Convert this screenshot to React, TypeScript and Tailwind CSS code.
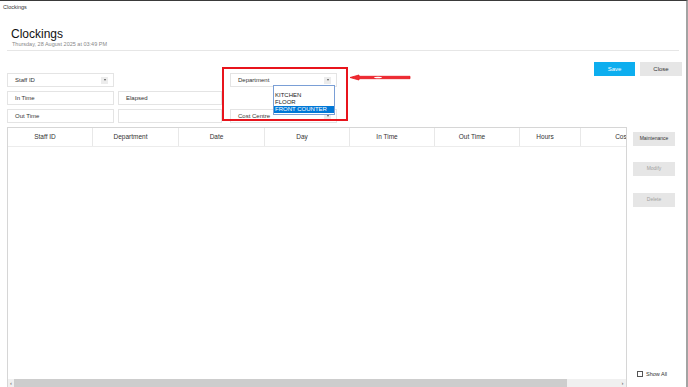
import React from 'react';

const COLUMNS: { label: string; width: number }[] = [
  { label: 'Staff ID', width: 85 },
  { label: 'Department', width: 86 },
  { label: 'Date', width: 86 },
  { label: 'Day', width: 85 },
  { label: 'In Time', width: 85 },
  { label: 'Out Time', width: 85 },
  { label: 'Hours', width: 61 },
  { label: 'Cost Centre', width: 114 },
];

function Field({ label, width }: { label?: string; width: number }) {
  return (
    <div
      className="h-[14px] flex items-center bg-white border border-[#e4e4e4] pl-[7px] text-[6px] text-[#333] flex-shrink-0"
      style={{ width }}
    >
      {label}
    </div>
  );
}

function Combo({ label }: { label: string }) {
  return (
    <div className="h-[14px] w-[107px] flex items-center justify-between bg-white border border-[#e4e4e4] pl-[7px] pr-[5px] text-[6px] text-[#333] flex-shrink-0">
      <span>{label}</span>
      {/* drop arrow */}
      <div className="w-[7px] h-[7px] bg-[#ececec] flex items-center justify-center">
        <div className="w-0 h-0 border-l-[1.5px] border-r-[1.5px] border-t-[2px] border-l-transparent border-r-transparent border-t-[#555]" />
      </div>
    </div>
  );
}

function SideButton({ label, disabled }: { label: string; disabled?: boolean }) {
  return (
    <div
      className={`w-[42px] h-[14px] flex items-center justify-center bg-[#e6e6e6] text-[5px] whitespace-nowrap ${disabled ? 'text-[#a0a0a0]' : 'text-[#333]'}`}
    >
      {label}
    </div>
  );
}

export default function App() {
  return (
    <div className="relative w-[688px] h-[387px] overflow-hidden bg-white border-t border-t-[#3a3a3a] border-r-2 border-r-[#a3a3a3] font-['Liberation_Sans',Arial,sans-serif] text-[#222] flex flex-col">
      {/* Window title */}
      <div className="h-[12px] pl-[3px] pt-[3px] text-[5.5px] leading-[6px] text-[#333]">Clockings</div>

      {/* Page heading */}
      <div className="pl-[11px] pt-[15px]">
        <div className="text-[12px] leading-[13px] text-[#111]">Clockings</div>
        <div className="text-[5.5px] leading-[7px] text-[#888] pl-[1px]">Thursday, 28 August 2025 at 03:49 PM</div>
      </div>
      <div className="mx-[7px] mt-[2px] border-t border-[#e6e6e6]" />

      {/* Filters + actions */}
      <div className="flex h-[76px] pl-[7px] pr-[4px]">
        <div className="mt-[22px] flex flex-col gap-[4px]">
          <div className="flex gap-[4px]">
            <Combo label="Staff ID" />
            <div className="w-[104px] flex-shrink-0" />
            <div className="ml-[4px]">
              <Combo label="Department" />
            </div>
          </div>
          <div className="flex gap-[4px]">
            <Field label="In Time" width={107} />
            <Field label="Elapsed" width={104} />
          </div>
          <div className="flex gap-[4px]">
            <Field label="Out Time" width={107} />
            <Field width={104} />
            <div className="ml-[4px]">
              <Combo label="Cost Centre" />
            </div>
          </div>
        </div>
        <div className="ml-auto mt-[11px] flex gap-[5px] h-[14px]">
          <div className="w-[41px] h-[14px] flex items-center justify-center bg-[#0daeef] text-white text-[6px]">Save</div>
          <div className="w-[42px] h-[14px] flex items-center justify-center bg-[#e6e6e6] text-[#333] text-[6px]">Close</div>
        </div>
      </div>

      {/* Grid + side buttons */}
      <div className="flex flex-1 min-h-0">
        <div className="ml-[7px] w-[620px] flex flex-col border-l border-t border-r border-[#d6d6d6] overflow-hidden">
          <div className="flex h-[19px] border-b border-[#ececec] flex-shrink-0">
            {COLUMNS.map(c => (
              <div
                key={c.label}
                className="flex-shrink-0 flex items-center justify-center pr-[10px] border-r border-[#e8e8e8] text-[6.5px] text-[#333] whitespace-nowrap"
                style={{ width: c.width }}
              >
                {c.label}
              </div>
            ))}
          </div>
          <div className="flex-1" />
          {/* Horizontal scrollbar */}
          <div className="h-[8px] flex items-center bg-[#f0f0f0] flex-shrink-0">
            <div className="w-[6px] flex items-center justify-center text-[6px] leading-[6px] text-[#555]">‹</div>
            <div className="w-[553px] h-full bg-[#cdcdcd]" />
            <div className="flex-1" />
            <div className="w-[7px] flex items-center justify-center text-[6px] leading-[6px] text-[#555]">›</div>
          </div>
        </div>
        <div className="ml-[6px] flex flex-col">
          <div className="mt-[5px]">
            <SideButton label="Maintenance" />
          </div>
          <div className="mt-[16px]">
            <SideButton label="Modify" disabled />
          </div>
          <div className="mt-[17px]">
            <SideButton label="Delete" disabled />
          </div>
          <div className="mt-auto mb-[9px] ml-[4px] flex items-center gap-[3px]">
            <div className="w-[6px] h-[6px] border border-[#555] bg-white" />
            <span className="text-[5.5px] text-[#333]">Show All</span>
          </div>
        </div>
      </div>

      {/* Open department dropdown */}
      <div className="absolute left-[273px] top-[84px] w-[62px] h-[30px] bg-white border border-[#7a9fd6] pt-[6px] text-[6px] leading-[7px] text-[#222]">
        <div className="pl-[1px]">KITCHEN</div>
        <div className="pl-[1px]">FLOOR</div>
        <div className="pl-[1px] bg-[#0078d7] text-white">FRONT COUNTER</div>
      </div>

      {/* Red highlight annotation */}
      <div className="absolute left-[222px] top-[66px] w-[126px] h-[54px] border-2 border-[#e8141c]" />
      <svg className="absolute left-[349px] top-[72px]" width="62" height="9" viewBox="0 0 62 9">
        <path
          d="M1 4.5 L10 2 L10 3.3 L61 3.3 L61 5.7 L10 5.7 L10 7 Z"
          fill="#ee2b33"
          stroke="#e8141c"
          strokeWidth="0.8"
        />
        <ellipse cx="29" cy="4.5" rx="4" ry="0.8" fill="#fff" />
      </svg>
    </div>
  );
}
